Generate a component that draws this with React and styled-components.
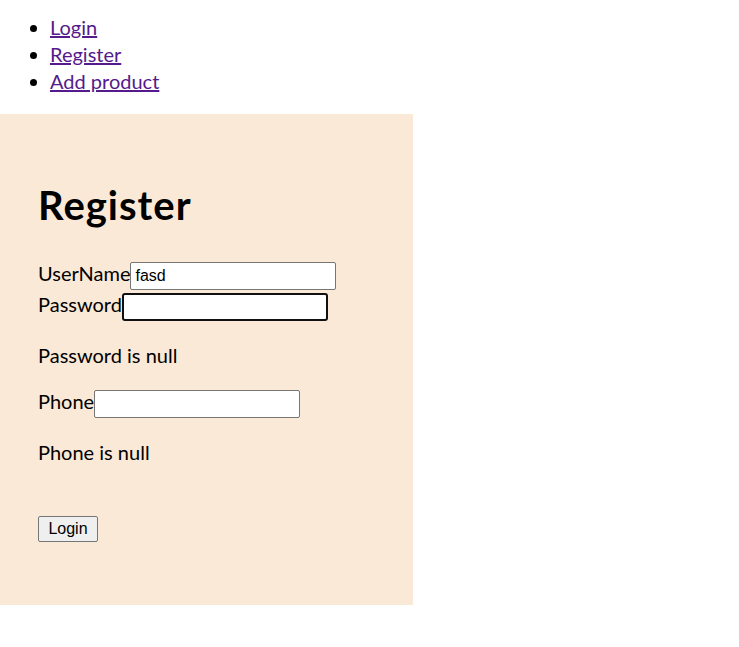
import React from "react";
import styled, { createGlobalStyle } from "styled-components";

const GlobalStyle = createGlobalStyle`
  body {
    margin: 0;
    background: #fff;
    font-family: Lato, "Noto Sans", sans-serif;
    color: #000;
  }
`;

const NavList = styled.ul`
  margin: 14px 0 19px;
  padding-left: 50px;
  font-size: 20px;
  line-height: 27px;
`;

const NavLink = styled.a`
  color: #551a8b;
  text-decoration: underline;
`;

const Panel = styled.div`
  width: 413px;
  box-sizing: border-box;
  background: #fae9d7;
  padding: 52px 38px 63px;
  font-size: 20px;
`;

const Title = styled.h1`
  font-size: 40px;
  line-height: 48px;
  letter-spacing: 1px;
  margin: 15px 0 33px;
  font-weight: 700;
`;

const Field = styled.div`
  display: flex;
  align-items: center;
  height: 28px;
  margin-bottom: ${(p) => p.$gap || 0}px;
`;

const Label = styled.label`
  line-height: 28px;
  margin-bottom: 6px;
`;

const Input = styled.input`
  width: 206px;
  height: 28px;
  box-sizing: border-box;
  font-family: "Liberation Sans", Arial, sans-serif;
  font-size: 16px;
  padding: 1px 4px;
  border: 1px solid #767676;
  border-radius: 2px;
  background: #fff;
  outline: none;
  ${(p) =>
    p.$focused &&
    `
    border: 2px solid #101010;
    border-radius: 3px;
  `}
`;

const ErrorText = styled.p`
  margin: 21px 0;
  line-height: 27px;
`;

const ButtonRow = styled.div`
  margin-top: 48px;
`;

const Button = styled.button`
  font-family: "Liberation Sans", Arial, sans-serif;
  font-size: 16px;
  height: 26px;
  width: 60px;
  padding: 0;
  background: #efefef;
  border: 1px solid #767676;
  border-radius: 2px;
  color: #000;
`;

export default function App() {
  return (
    <>
      <GlobalStyle />
      <NavList>
        <li>
          <NavLink href="#">Login</NavLink>
        </li>
        <li>
          <NavLink href="#">Register</NavLink>
        </li>
        <li>
          <NavLink href="#">Add product</NavLink>
        </li>
      </NavList>
      <Panel>
        <Title>Register</Title>
        <Field $gap={3}>
          <Label>UserName</Label>
          <Input defaultValue="fasd" />
        </Field>
        <Field>
          <Label>Password</Label>
          <Input $focused defaultValue="" />
        </Field>
        <ErrorText>Password is null</ErrorText>
        <Field>
          <Label>Phone</Label>
          <Input defaultValue="" />
        </Field>
        <ErrorText>Phone is null</ErrorText>
        <ButtonRow>
          <Button>Login</Button>
        </ButtonRow>
      </Panel>
    </>
  );
}
